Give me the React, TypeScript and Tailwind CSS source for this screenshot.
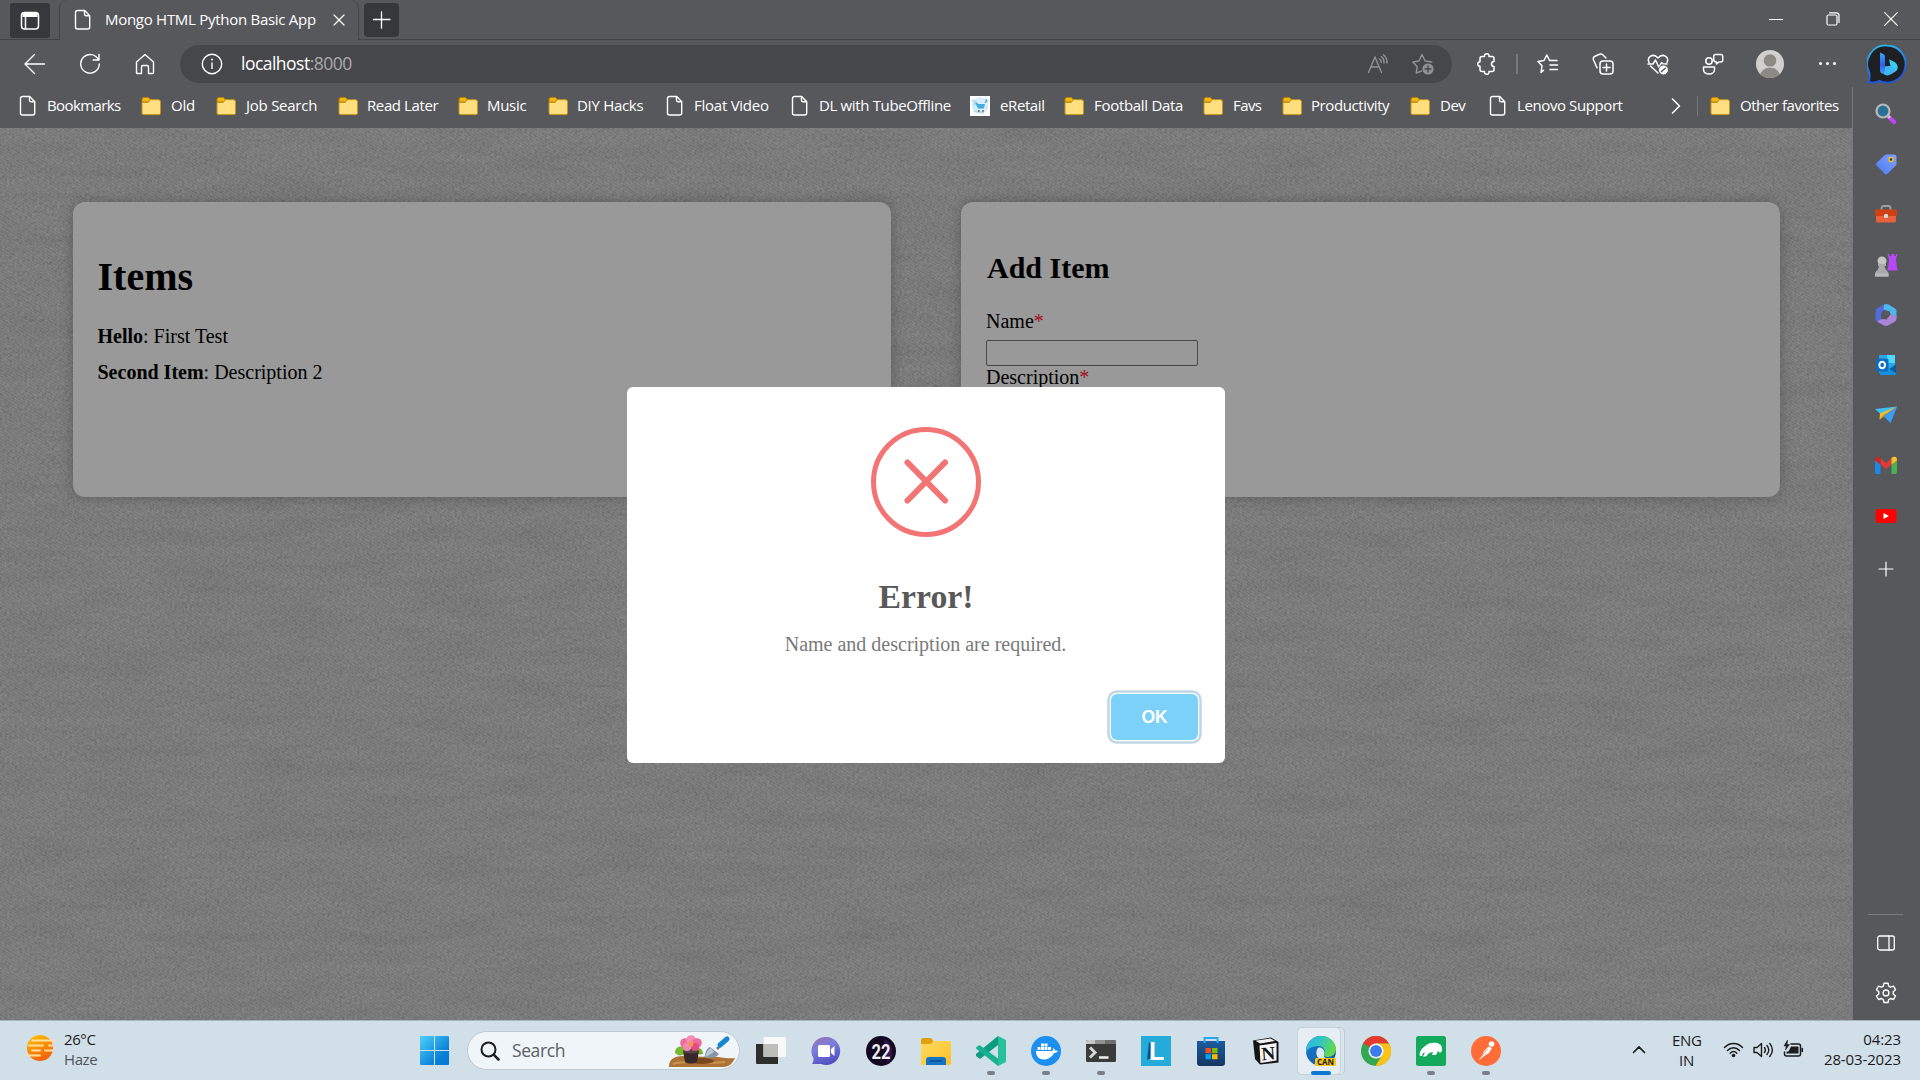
import React from "react";

const UI = "font-['Open_Sans','Noto_Sans',sans-serif]";

type SvgProps = { w?: number; h?: number; vb?: string; sw?: number; children: React.ReactNode; className?: string };

function Line({ w = 24, h = 24, vb = "0 0 24 24", sw = 1.4, children, className = "" }: SvgProps) {
  return (
    <svg width={w} height={h} viewBox={vb} fill="none" stroke="currentColor" strokeWidth={sw} strokeLinecap="round" strokeLinejoin="round" className={className}>
      {children}
    </svg>
  );
}

function Art({ w = 30, h = 30, vb = "0 0 30 30", children }: SvgProps) {
  return (
    <svg width={w} height={h} viewBox={vb} className="shrink-0">
      {children}
    </svg>
  );
}

function PageIcon() {
  return (
    <Line w={20} h={22} vb="0 0 20 22" sw={1.4} className="shrink-0">
      <path d="M4.500 1.500h7.200l5 5.200v11.300a2 2 0 0 1-2 2H4.500a2 2 0 0 1-2-2v-14.500a2 2 0 0 1 2-2z" />
      <path d="M11.500 1.700v3.500a1.600 1.600 0 0 0 1.600 1.600h3.400" />
    </Line>
  );
}

function FolderIcon() {
  return (
    <Art w={20} h={20} vb="0 0 20 20">
      <path d="M1 3.500a2 2 0 0 1 2-2h4.500l1.700 2-1.700 2.500H1z" fill="#f5b60d" stroke="#b58309" strokeWidth="1" />
      <path d="M1 6.500h6.200L9 3.700h8.500a2 2 0 0 1 2 2V17a1.600 1.600 0 0 1-1.600 1.600H2.600A1.600 1.600 0 0 1 1 17z" fill="#ffdf80" stroke="#c4951d" strokeWidth="1" />
    </Art>
  );
}

function RetailIcon() {
  return (
    <Art w={20} h={20} vb="0 0 20 20">
      <rect width="20" height="20" fill="#fff" />
      <circle cx="10" cy="9.500" r="8.300" fill="#d7eef8" />
      <path d="M2 4l4 2M3 8l3 .5M15 3l3 3M4 15l10 2" stroke="#b9dcec" strokeWidth="2" />
      <path d="M5 6.500h2l1 1.500h7l-1.200 4.500H8z" fill="#45acdf" />
      <path d="M15 7l2-3.500" stroke="#48a9db" strokeWidth="1.300" />
      <circle cx="8.800" cy="15" r="1" fill="#5a6a72" />
      <circle cx="13" cy="15" r="1" fill="#5a6a72" />
    </Art>
  );
}

const bookmarks = [
  { label: "Bookmarks", kind: "page", box: "w-[123px] gap-[9px]", track: "tracking-[-0.6px]" },
  { label: "Old", kind: "folder", box: "w-[75px] gap-[10px]", track: "tracking-[-0.2px]" },
  { label: "Job Search", kind: "folder", box: "w-[122px] gap-[10px]", track: "tracking-[-0.25px]" },
  { label: "Read Later", kind: "folder", box: "w-[120px] gap-[9px]", track: "tracking-[-0.4px]" },
  { label: "Music", kind: "folder", box: "w-[90px] gap-[9px]", track: "tracking-[-0.3px]" },
  { label: "DIY Hacks", kind: "folder", box: "w-[117px] gap-[9px]", track: "tracking-[-0.3px]" },
  { label: "Float Video", kind: "page", box: "w-[125px] gap-[9px]", track: "tracking-[-0.25px]" },
  { label: "DL with TubeOffline", kind: "page", box: "w-[180px] gap-[9px]", track: "tracking-[-0.35px]" },
  { label: "eRetail", kind: "retail", box: "w-[94px] gap-[10px]", track: "tracking-[-0.4px]" },
  { label: "Football Data", kind: "folder", box: "w-[139px] gap-[10px]", track: "tracking-[-0.3px]" },
  { label: "Favs", kind: "folder", box: "w-[79px] gap-[10px]", track: "tracking-[-0.6px]" },
  { label: "Productivity", kind: "folder", box: "w-[128px] gap-[9px]", track: "tracking-[-0.4px]" },
  { label: "Dev", kind: "folder", box: "w-[78px] gap-[10px]", track: "tracking-[-0.5px]" },
  { label: "Lenovo Support", kind: "page", box: "w-[174px] gap-[9px]", track: "tracking-[-0.4px]" },
];

function TabStrip() {
  return (
    <div className="flex h-[40px] shrink-0">
      <div className="flex w-[59px] border-b border-[#434448] pl-[10px] pt-[3px]">
        <div className="flex h-[35px] w-[40px] items-center justify-center rounded-[3px] bg-[#37383c]">
          <Line w={20} h={20} vb="0 0 20 20" sw={1.5}>
            <rect x="1.500" y="1.500" width="17" height="16.500" rx="3" />
            <path d="M2.500 4h15" strokeWidth="4" strokeLinecap="butt" />
            <path d="M5.500 6v12" />
          </Line>
        </div>
      </div>
      <div className="flex w-[300px] items-center rounded-t-[8px] border-x border-[#434448] pb-[1px] pl-[13px]">
        <PageIcon />
        <span className="ml-[12px] w-[228px] whitespace-nowrap text-[15px] tracking-[-0.28px]">Mongo HTML Python Basic App</span>
        <Line w={12} h={12} vb="0 0 12 12" sw={1.200}><path d="M1 1l10 10M11 1L1 11" /></Line>
      </div>
      <div className="flex flex-1 border-b border-[#434448] pl-[5px] pt-[3px]">
        <div className="flex h-[34px] w-[35px] items-center justify-center rounded-[4px] bg-[#37383c]">
          <Line w={18} h={18} vb="0 0 18 18" sw={1.300}><path d="M8.500 .8v16.400M.5 8.500h16.400" /></Line>
        </div>
        <div className="mt-[-3px] mr-[1px] ml-auto flex h-[38px]">
          <div className="flex w-[57px] items-center justify-center"><Line w={14} h={14} vb="0 0 14 14" sw={1.200}><path d="M.5 7.500h13" /></Line></div>
          <div className="flex w-[58px] items-center justify-center">
            <Line w={14} h={14} vb="0 0 14 14" sw={1.200}><rect x="1" y="3" width="10" height="10" rx="1.500" /><path d="M3.500.8h7a2.500 2.500 0 0 1 2.500 2.500v7.200" /></Line>
          </div>
          <div className="flex w-[57px] items-center justify-center"><Line w={14} h={14} vb="0 0 14 14" sw={1.200}><path d="M.7.7l12.600 12.600M13.300.7L.7 13.300" /></Line></div>
        </div>
      </div>
    </div>
  );
}

function BingIcon() {
  return (
    <Art w={40} h={40} vb="0 0 40 40">
      <defs>
        <linearGradient id="bingRing" x1="0" y1="0" x2="0.3" y2="1">
          <stop offset="0" stopColor="#2bc0ee" /><stop offset="1" stopColor="#1c55e6" />
        </linearGradient>
        <linearGradient id="bingB" x1="0" y1="0" x2="0" y2="1">
          <stop offset="0" stopColor="#37a5fa" /><stop offset=".6" stopColor="#2b62e6" /><stop offset="1" stopColor="#3f9df8" />
        </linearGradient>
      </defs>
      <path d="M20 1.500a18.500 18.500 0 1 1-7.500 35.400c-2.500 1.400-6.500 2-10.800 1.300 1-3.400 1.300-6 .7-9.500A18.500 18.500 0 0 1 20 1.500z" fill="#1e1f22" stroke="url(#bingRing)" strokeWidth="1.800" />
      <path d="M15.500 22.500v5.500c2 4.500 6 4 9 2l4-2.500c2.300-1.600 2.700-4 1.800-6z" fill="#3fb5f6" />
      <path d="M22 15.200l5.500 2.800c3.300 1.700 3.800 6 .8 8.500l-1.800-3.300-3-1.300z" fill="#37cff2" />
      <path d="M13 8.500l3.500 1.800c1 .6 1.500 1.200 1.500 2.400v14.500c0 3.500-5 3-5-.8z" fill="url(#bingB)" />
    </Art>
  );
}

function AddressRow() {
  return (
    <div className="flex h-[47px] shrink-0 items-center">
      <div className="flex w-[180px] items-center pl-[23px]">
        <Line w={22} h={22} vb="0 0 22 22" sw={1.400}><path d="M21.500 11H2.500M11.500 1.500L2 11l9.500 9.500" /></Line>
        <Line w={22} h={22} vb="0 0 22 22" sw={1.400} className="ml-[34px]"><path d="M19.500 7A9.300 9.300 0 1 0 20.300 11M20 1.500V7h-5.800" /></Line>
        <Line w={20} h={22} vb="0 0 20 22" sw={1.400} className="ml-[34px]"><path d="M10 1.500l8.500 7.500v10.500a1 1 0 0 1-1 1h-4v-6.500a1.500 1.500 0 0 0-1.500-1.500H8a1.500 1.500 0 0 0-1.500 1.500v6.500h-4a1 1 0 0 1-1-1V9z" /></Line>
      </div>
      <div className="flex h-[38px] w-[1272px] items-center rounded-full bg-[#46474a] pl-[21px]">
        <Line w={22} h={22} vb="0 0 22 22" sw={1.400}><circle cx="11" cy="11" r="9.700" /><path d="M11 10v5.500" /><path d="M11 6.500v.1" strokeWidth="2" /></Line>
        <span className="ml-[18px] text-[17.500px] tracking-[-0.52px]">localhost<span className="text-[#a9aaad]">:8000</span></span>
        <div className="ml-auto flex items-center gap-[23px] pr-[18px] text-[#919295]">
          <Line w={22} h={20} vb="0 0 22 20" sw={1.400}><path d="M1.500 18.500L8 3l6.500 15.500M4 13h8M12.500 5a4 4 0 0 1 1.800 3.500M14.500 2.500A7.500 7.500 0 0 1 17 9M16.500.8A10 10 0 0 1 20 9" /></Line>
          <Line w={22} h={22} vb="0 0 22 22" sw={1.400}>
            <path d="M9.500 18L4.200 20.200l1-6.500L.9 9l6-1L10 1.500l3.100 6.500 6.700 1" />
            <circle cx="16" cy="16" r="5.600" fill="currentColor" stroke="none" />
            <path d="M16 13v6M13 16h6" stroke="#46474a" />
          </Line>
        </div>
      </div>
      <div className="flex items-center pl-[8px]">
        <div className="flex w-[52px] justify-center">
          <Line w={22} h={22} vb="0 0 22 22" sw={1.500}><path d="M7 3.500h2.500a2.300 2.300 0 1 1 4.500 0h3a2 2 0 0 1 2 2v3a2.400 2.400 0 1 0 0 5v3a2 2 0 0 1-2 2H14a2.300 2.300 0 1 1-4.500 0H7a2 2 0 0 1-2-2v-3.200a2.300 2.300 0 1 1 0-4.600V5.500a2 2 0 0 1 2-2z" /></Line>
        </div>
        <div className="mr-[2px] ml-[4px] h-[20px] w-[2px] bg-[#77787c]" />
        <div className="flex w-[56px] justify-center">
          <Line w={22} h={20} vb="0 0 22 20" sw={1.500}><path d="M6.500 16.200L4 18.500l1-6.700L1 7.500l6-1L9.800 1l2.800 5.500H20M13 11h7.500M13 15.500h7.500" /></Line>
        </div>
        <div className="flex w-[54px] justify-center">
          <Line w={22} h={22} vb="0 0 22 22" sw={1.500}><rect x="8" y="8" width="13" height="13" rx="3" /><path d="M14.500 11v7M11 14.500h7M5 14.800L1.500 7A3 3 0 0 1 3 3.200L7.500 1.300a3 3 0 0 1 3.500.7l3 3" /></Line>
        </div>
        <div className="flex w-[56px] justify-center">
          <Line w={22} h={22} vb="0 0 22 22" sw={1.500}>
            <path d="M2 9.500C-.5 4 6 -.5 11 5c5-5.500 11.500-1 9 4.500M3.500 13l7.500 7M1 11h5l2.500-4 3.500 7.500 2.500-5 1.500 1.500h4" />
            <circle cx="16.500" cy="17" r="5" fill="#fff" stroke="#57585c" strokeWidth="1" /><path d="M14.500 18.500l3.800-3.300" stroke="#57585c" />
          </Line>
        </div>
        <div className="flex w-[54px] justify-center">
          <Line w={22} h={22} vb="0 0 22 22" sw={1.500}><circle cx="7" cy="8" r="3.200" /><path d="M1.500 14h11v2.500c0 6-11 6-11 0zM13.500 1.500h5.500a1.700 1.700 0 0 1 1.700 1.700v4A1.700 1.700 0 0 1 19 9h-2l-2.500 2V9c-2 0-2.800-.8-2.800-2.500V3.200a1.700 1.700 0 0 1 1.800-1.700z" /></Line>
        </div>
        <div className="flex w-[60px] justify-center">
          <Art w={28} h={28} vb="0 0 28 28">
            <clipPath id="avatarClip"><circle cx="14" cy="14" r="14" /></clipPath>
            <g clipPath="url(#avatarClip)"><rect width="28" height="28" fill="#d2d0ce" /><circle cx="14" cy="10.500" r="6.300" fill="#8d8985" /><circle cx="14" cy="28" r="11" fill="#8d8985" stroke="#d2d0ce" strokeWidth="1" /></g>
          </Art>
        </div>
        <div className="flex w-[55px] justify-center gap-[4px]">
          <i className="size-[3px] rounded-full bg-white" /><i className="size-[3px] rounded-full bg-white" /><i className="size-[3px] rounded-full bg-white" />
        </div>
        <div className="flex w-[62px] justify-center pt-[1px] pl-[2px]"><BingIcon /></div>
      </div>
    </div>
  );
}

function BookmarksBar() {
  return (
    <div className="flex h-[41px] shrink-0 items-center pb-[3px] pl-[18px] text-[15px]">
      {bookmarks.map((b) => (
        <div key={b.label} className={`flex shrink-0 items-center whitespace-nowrap ${b.box} ${b.track}`}>
          {b.kind === "page" ? <PageIcon /> : b.kind === "retail" ? <RetailIcon /> : <FolderIcon />}
          <span className="pb-px">{b.label}</span>
        </div>
      ))}
      <div className="flex w-[28px] shrink-0 justify-center"><Line w={10} h={16} vb="0 0 10 16" sw={1.500}><path d="M1.500 1l7 7-7 7" /></Line></div>
      <div className="mr-[12px] ml-[7px] h-[20px] w-px bg-[#77787c]" />
      <FolderIcon />
      <span className="ml-[10px] whitespace-nowrap pb-px tracking-[-0.45px]">Other favorites</span>
    </div>
  );
}

function FabricTexture() {
  return (
    <svg className="absolute inset-0 h-full w-full">
      <defs>
        <pattern id="twill" width="5" height="3" patternUnits="userSpaceOnUse">
          <path d="M-1 -0.600l7 4.200" stroke="#fff" strokeWidth="1" opacity="0.06" />
        </pattern>
        <filter id="fabric" x="0" y="0" width="100%" height="100%" colorInterpolationFilters="sRGB">
          <feTurbulence type="fractalNoise" baseFrequency="0.4 0.35" numOctaves="2" seed="4" />
          <feColorMatrix values="0.12 0.06 0 0 0.388  0.12 0.06 0 0 0.388  0.12 0.06 0 0 0.388  0 0 0 0 1" />
        </filter>
        <filter id="streaks" x="0" y="0" width="100%" height="100%" colorInterpolationFilters="sRGB">
          <feTurbulence type="fractalNoise" baseFrequency="0.012 0.06" numOctaves="4" seed="9" />
          <feColorMatrix values="0 0 0 0 0  0 0 0 0 0  0 0 0 0 0  0.5 0 0 0 -0.18" />
        </filter>
      </defs>
      <rect width="100%" height="100%" filter="url(#fabric)" />
      <rect width="100%" height="100%" fill="url(#twill)" />
      <rect width="100%" height="100%" filter="url(#streaks)" opacity="0.18" />
    </svg>
  );
}

const cardClass = "h-[295px] rounded-[12px] bg-[#999999] shadow-[0_0_14px_rgba(0,0,0,0.25)]";

function WebPage() {
  return (
    <main className="relative flex-1 overflow-hidden bg-[#787878] font-['Liberation_Serif',serif] text-[20px] text-black">
      <FabricTexture />
      <div className="relative grid grid-cols-[818px_819px] gap-[70px] pl-[73px] pt-[74px]">
        <section className={`${cardClass} pl-[24.500px] pt-[52px]`}>
          <h1 className="text-[40px] leading-[46px] font-bold">Items</h1>
          <ul className="mt-[18px] leading-[36px]">
            <li><b>Hello</b>: First Test</li>
            <li><b>Second Item</b>: Description 2</li>
          </ul>
        </section>
        <section className={`${cardClass} pl-[25px] pt-[49px]`}>
          <h2 className="pl-px text-[30px] leading-[34px] font-bold">Add Item</h2>
          <label className="mt-[24px] block leading-[24px]">Name<span className="text-[#a80d1c]">*</span></label>
          <input className="mt-[7px] block h-[26px] w-[212px] rounded-[2px] border border-[#474747] bg-[#999999]" />
          <label className="block leading-[23px]">Description<span className="text-[#a80d1c]">*</span></label>
        </section>
      </div>
      <div className="absolute inset-0 flex items-center justify-center pt-[2px]">
        <div role="dialog" className="flex h-[376px] w-[598px] flex-col items-center rounded-[6px] bg-white pt-[40px]">
          <svg width="110" height="110" viewBox="0 0 110 110" fill="none" stroke="#f27474" strokeWidth="5" strokeLinecap="round">
            <circle cx="55" cy="55" r="52.500" /><path d="M36.500 35.500l37.500 38M74 35.500l-37.500 38" strokeWidth="6" />
          </svg>
          <h2 className="mt-[40px] text-[33.750px] leading-[40px] font-bold text-[#595959]">Error!</h2>
          <p className="mt-[15px] mr-[1px] leading-[24px] text-[#797979]">Name and description are required.</p>
          <button className="mt-[38px] mr-[27px] h-[46px] w-[87px] self-end rounded-[6px] bg-[#7cd1f9] font-['Liberation_Sans',sans-serif] text-[17.500px] font-bold text-white shadow-[0_0_0_1.250px_#fff,0_0_0_3.750px_rgba(43,114,165,0.290)]">OK</button>
        </div>
      </div>
    </main>
  );
}

const sideIcons: React.ReactNode[] = [
  <Art w={22} h={22} vb="0 0 22 22">
    <path d="M14.500 14.500L19 19" stroke="#c143f5" strokeWidth="4.200" strokeLinecap="round" /><path d="M12 12l3 3" stroke="#c5c5c5" strokeWidth="3" />
    <circle cx="8" cy="8" r="6.500" fill="#2a6f95" stroke="#b9b9b9" strokeWidth="2.200" />
  </Art>,
  <Art w={22} h={22} vb="0 0 22 22">
    <defs><linearGradient id="tagFill" x1="0" y1="1" x2="1" y2="0"><stop offset="0" stopColor="#4a7cf3" /><stop offset="1" stopColor="#86a0ff" /></linearGradient></defs>
    <path d="M12 1.500h7a2.500 2.500 0 0 1 2.500 2.500v6.500c0 1-.3 1.500-1 2.200l-8 8a2 2 0 0 1-2.800 0l-8-8.200a2 2 0 0 1 0-2.800l8-7.500c.7-.5 1.300-.7 2.300-.7z" fill="url(#tagFill)" />
    <circle cx="16" cy="6.500" r="2" fill="#20306c" stroke="#f1c40f" strokeWidth="1.500" />
  </Art>,
  <Art w={24} h={20} vb="0 0 24 20">
    <path d="M7.500 6V4a2 2 0 0 1 2-2h5a2 2 0 0 1 2 2v2" fill="none" stroke="#a0a0a0" strokeWidth="1.800" />
    <rect x="2" y="8" width="20" height="10.500" rx="1.800" fill="#e8613c" /><rect x="1" y="5.500" width="22" height="6.500" rx="1.200" fill="#cf4015" /><circle cx="12" cy="12" r="2.200" fill="#d9d9d9" />
  </Art>,
  <Art w={24} h={24} vb="0 0 24 24">
    <path d="M13.500 1h2v2h2V1h3v2h1.500V1h1.500l-1.500 5.500.8 7.500 1 3.500H13l1.200-3.500.8-7.500z" fill="#b648f5" />
    <circle cx="8" cy="8" r="4.500" fill="#c4c4c4" /><path d="M4 11h8v2h-1.500c0 3 2 4 4 7v3.500H1V20c2-3 4-4 4-7H4z" fill="#aaa" /><path d="M1 20.500h13.500v3H1z" fill="#b9b9b9" />
  </Art>,
  <Art w={24} h={24} vb="0 0 24 24">
    <path d="M10 1.500L3 5.500a3 3 0 0 0-1.500 2.500v8A3 3 0 0 0 3 18.500l4 2v-9c0-2 1-3 2.500-4l5-3z" fill="#536bd9" />
    <path d="M10 1.500c1.500-.7 3-.7 4.500 0L21 5.500A3 3 0 0 1 22.500 8v6l-6-2.500-.8-3L9.500 6.500z" fill="#4fb6ec" />
    <path d="M22.500 13v3a3 3 0 0 1-1.500 2.500l-7 4c-1.200.6-2.500.6-4 0L3 18.500l4.500-2.500 5 .5 4-5z" fill="#a984d9" />
  </Art>,
  <Art w={22} h={22} vb="0 0 22 22">
    <rect x="4" y="1" width="16" height="18" rx="1" fill="#28a8ea" /><path d="M12 1h7a1 1 0 0 1 1 1v7h-8z" fill="#50d9ff" /><path d="M5 12l9 5 7-6v9a1 1 0 0 1-1 1H6a1 1 0 0 1-1-1z" fill="#1490df" /><path d="M14 15l7-4.500V19z" fill="#0a5ba0" />
    <rect x="1" y="4.500" width="12.500" height="13" rx="1.500" fill="#0e6cc0" /><ellipse cx="7.200" cy="11" rx="2.800" ry="3.300" fill="none" stroke="#fff" strokeWidth="2" />
  </Art>,
  <Art w={24} h={20} vb="0 0 24 20">
    <path d="M1 4l22-2.500-15 9z" fill="#3fc0f3" /><path d="M23 1.500L16.500 18 10 10.500z" fill="#2f8fe6" /><path d="M23 1.500L6 8.500l-.5 6z" fill="#f5c02c" /><path d="M23 1.500L8.500 10.500l-3 4.500 5-4z" fill="#d99505" /><path d="M23 1.500L9.500 11l7 7z" fill="#3c9cf1" />
  </Art>,
  <Art w={24} h={20} vb="0 0 24 20">
    <path d="M1 5l5.500 4v10H3a2 2 0 0 1-2-2z" fill="#1e88e5" /><path d="M23 5l-5.500 4v10H21a2 2 0 0 0 2-2z" fill="#4caf50" />
    <path d="M6.500 3.500L12 8l5.500-4.500V9.500L12 14 6.500 9.500z" fill="#e53935" /><path d="M1 4.500C1 1.500 4 .8 6.500 3v6.500L1 5.500z" fill="#c62828" /><path d="M23 4.500c0-3-3-3.700-5.500-1.500v6.500L23 5.500z" fill="#fbc02d" />
  </Art>,
  <Art w={22} h={16} vb="0 0 22 16">
    <rect x=".5" y="1" width="21" height="14" rx="3" fill="#f00" /><path d="M8.500 5v6l5.500-3z" fill="#fff" />
  </Art>,
];

function Sidebar() {
  return (
    <aside className="flex w-[67px] shrink-0 flex-col items-center bg-[#57585c] pt-[2px] pr-[2px]">
      {sideIcons.map((icon, i) => (
        <div key={i} className="flex h-[50.200px] shrink-0 items-center">{icon}</div>
      ))}
      <div className="mt-[3px] flex h-[50px] items-center"><Line w={16} h={16} vb="0 0 16 16" sw={1.200}><path d="M8 1v14M1 8h14" /></Line></div>
      <div className="mt-auto h-px w-[35px] bg-[#7b7c80]" />
      <div className="flex h-[55px] items-center"><Line w={18} h={16} vb="0 0 18 16" sw={1.300}><rect x=".7" y="1" width="16.600" height="14" rx="2" /><path d="M12 1v14" /></Line></div>
      <div className="mb-[4px] flex h-[46px] items-center">
        <Line w={22} h={22} vb="0 0 22 22" sw={1.400}>
          <path d="M9 1.200h4l.7 3 1.800 1 3-1 2 3.500-2.300 2v2.200l2.300 2.100-2 3.500-3-1-1.800 1-.7 3H9l-.7-3-1.800-1-3 1-2-3.500 2.300-2.100V9.700l-2.300-2 2-3.500 3 1 1.800-1z" /><circle cx="11" cy="10.900" r="2.900" />
        </Line>
      </div>
    </aside>
  );
}

function FlowerArt() {
  return (
    <Art w={67} h={33} vb="0 0 67 33">
      <path d="M0 32c0-7 4-11 14-11 12-1 15 2 26 0 12 1 18 3 26 2-2 5-6 9-12 9z" fill="#ad7235" />
      <path d="M4 29c15-5 35 1 52-2" stroke="#c9954d" strokeWidth="2" fill="none" />
      <ellipse cx="33" cy="26" rx="12" ry="3" fill="#7b471d" />
      <path d="M6 18c0-6 5-8 10-5v6c-4 2-7 2-10-1zM27 13c4-1 7 2 7 6-4 1-7 0-8-3z" fill="#78b82c" />
      <path d="M14 16h16l-2 11c-2 2-10 2-12 0z" fill="#37292a" /><ellipse cx="22" cy="16" rx="8" ry="2.500" fill="#594546" />
      <circle cx="16" cy="8" r="4.800" fill="#ee6c99" /><circle cx="22" cy="5" r="4.800" fill="#f48db4" /><circle cx="28" cy="8" r="4.800" fill="#ee6c99" /><circle cx="26" cy="12" r="4" fill="#e34b85" /><circle cx="18" cy="12" r="4" fill="#f389b0" /><circle cx="22" cy="9" r="2.500" fill="#f39a4a" />
      <path d="M48 14l4-4" stroke="#777" strokeWidth="2.500" /><path d="M51 10l7-6" stroke="#1685d2" strokeWidth="5" strokeLinecap="round" />
      <path d="M41 12l9 7c-3 4-8 4-14 4 0-5 1-9 5-11z" fill="#8496a3" /><path d="M42 13l3 4-8 5c0-4 1-7 5-9z" fill="#bccbd5" />
    </Art>
  );
}

const taskApps: { icon: React.ReactNode; running?: boolean; active?: boolean }[] = [
  { icon: <Art><path d="M0 8h22v20H1a1 1 0 0 1-1-1z" fill="#2e2e2c" /><rect x="7.500" y="1" width="22.500" height="20" rx="1" fill="#f8f8f8" /><path d="M7.500 8H22v13H7.500z" fill="#bdbdbb" /></Art> },
  { icon: <Art>
    <defs><linearGradient id="chat" x1="0" y1="0" x2=".4" y2="1"><stop offset="0" stopColor="#9a6fae" /><stop offset=".45" stopColor="#7a7fdc" /><stop offset="1" stopColor="#5352c4" /></linearGradient></defs>
    <path d="M15 1a14 14 0 1 1-5 27H2c-1 0-1-.6-.3-1.500.8-1 1-2.500.7-4.500A14 14 0 0 1 15 1z" fill="url(#chat)" /><rect x="7" y="9" width="12" height="12" rx="1.500" fill="#fff" /><path d="M20 13l3.500-3v10L20 17z" fill="#fff" /></Art> },
  { icon: <Art><circle cx="15" cy="15" r="15" fill="#130a22" /><path d="M18 3a14 14 0 0 1 3 24z" fill="#2d1451" /><text x="15" y="22.500" textAnchor="middle" fontSize="21" fontWeight="700" fill="#eee" textLength="19" lengthAdjust="spacingAndGlyphs" fontFamily="Roboto">22</text></Art> },
  { icon: <Art>
    <defs><linearGradient id="fold" x1="0" y1="0" x2="1" y2="1"><stop offset="0" stopColor="#ffdb5f" /><stop offset="1" stopColor="#fdbe2a" /></linearGradient></defs>
    <path d="M0 4a2 2 0 0 1 2-2h8l3 4-3 5H0z" fill="#dfa00e" /><path d="M0 8h10l2.500-3H28a2 2 0 0 1 2 2v20a2 2 0 0 1-2 2H1.500A1.500 1.500 0 0 1 0 27.500z" fill="url(#fold)" /><path d="M5 29v-5a3 3 0 0 1 3-3h14a3 3 0 0 1 3 3v5z" fill="#1373c5" /><path d="M9 25h12" stroke="#0a4d91" strokeWidth="1.500" /></Art> },
  { icon: <Art><path d="M22 0l8 4v22l-8 4z" fill="#28bf9d" /><path d="M22 0v9L4 23l-4-3v-2z" fill="#0c9c80" /><path d="M0 11.500L3.500 9 22 22.500V30L0 12.500z" fill="#18b293" /></Art>, running: true },
  { icon: <Art><circle cx="15" cy="15" r="15" fill="#1d8ff0" /><path d="M5 15h16c1 0 1.300-1.500.7-3 1.600.3 2 1.500 2.300 2.500l3 .3c-1 2-2.500 2.200-4 2.200C21 21 17 23.500 13 23.500c-5 0-8-3-8-8.500z" fill="#fff" /><path d="M6.500 11h3v3h-3zM10 11h3v3h-3zM13.500 11h3v3h-3zM17 11h3v3h-3zM10 7.600h3v3h-3zM13.500 7.600h3v3h-3z" fill="#fff" /></Art>, running: true },
  { icon: <Art><rect y="4" width="30" height="22" rx="1.500" fill="#3b3b3b" /><path d="M0 5.500A1.500 1.500 0 0 1 1.500 4H9v4H0z" fill="#c7c7c7" /><path d="M9 4h10v4H9z" fill="#919191" /><path d="M19 4h9.500A1.500 1.500 0 0 1 30 5.500V8H19z" fill="#6f6f6f" /><path d="M4 11.500l5 5-5 5" stroke="#d6d6d6" strokeWidth="3" fill="none" /><path d="M13 21.500h9.500" stroke="#f2f2f2" strokeWidth="2.500" /></Art>, running: true },
  { icon: <Art><rect width="30" height="30" fill="#25abda" /><path d="M6 24l2-18 4 3v12z" fill="#114f86" /><text x="8" y="23.500" fontSize="25" fontWeight="700" fill="#fff" fontFamily="Liberation Sans">L</text></Art> },
  { icon: <Art>
    <defs><linearGradient id="store" x1="0" y1="0" x2="0" y2="1"><stop offset="0" stopColor="#1b5c9e" /><stop offset="1" stopColor="#153662" /></linearGradient></defs>
    <path d="M1 5h28v22a3 3 0 0 1-3 3H4a3 3 0 0 1-3-3z" fill="url(#store)" /><path d="M8.500 7V2h13v5" stroke="#24a8ee" strokeWidth="2" fill="none" /><path d="M9.500 12H15v5.200H9.500z" fill="#f25022" /><path d="M16 12h5.500v5.200H16z" fill="#7fba00" /><path d="M9.500 18.200H15v5H9.500z" fill="#00a4ef" /><path d="M16 18.200h5.500v5H16z" fill="#ffb900" /></Art> },
  { icon: <Art><path d="M2 4.500L20 1.500l7.500 4.500v20.500L9 28.500l-5-5.500z" fill="#151515" /><path d="M4.500 4.800l15-2.300 4.500 2.500L9 7.500z" fill="#f4f4f4" /><path d="M8.500 9.500l17-2.500v17.500l-16 2.500z" fill="#f7f7f7" /><text x="10.500" y="24" fontSize="19" fontWeight="700" fill="#151515" fontFamily="Liberation Serif" transform="rotate(-5 17 18)">N</text></Art> },
  { icon: <Art>
    <defs>
      <linearGradient id="edgeTop" x1="0" y1="0" x2="1" y2=".4"><stop offset="0" stopColor="#2fb0ea" /><stop offset=".5" stopColor="#31c6c5" /><stop offset="1" stopColor="#63d94f" /></linearGradient>
      <linearGradient id="edgeBody" x1="0" y1="0" x2="1" y2="1"><stop offset="0" stopColor="#1683d8" /><stop offset="1" stopColor="#124f94" /></linearGradient>
    </defs>
    <circle cx="15" cy="15" r="15" fill="url(#edgeBody)" /><path d="M0 14C1 5 8 0 15 0c9 0 15 6.500 15 13 0 5-4 8-8 8-3.500 0-5-1.500-4-3 2-3 0-8-6-8C6 10 1 13 0 17z" fill="url(#edgeTop)" /><path d="M12 12c-3 4-2 10 4 13 3 1.500 7 1 10-1-3 0-9-1-8-6 1.500-3-2-8-6-6z" fill="#dceaf2" />
    <rect x="9" y="22" width="21" height="8" rx="1.500" fill="#fcc419" /><text x="19.500" y="29" textAnchor="middle" fontSize="8" fontWeight="700" fill="#222" fontFamily="Open Sans">CAN</text></Art>, active: true },
  { icon: <Art><circle cx="15" cy="15" r="15" fill="#33a853" /><path d="M15 15L2 7.500A15 15 0 0 1 28 7.500H15z" fill="#e63a2e" /><path d="M15 7.500h13A15 15 0 0 1 14.500 30L21.500 18z" fill="#fbc116" /><path d="M2 7.500L8.500 19 15 15z" fill="#33a853" /><circle cx="15" cy="15" r="7.500" fill="#fff" /><circle cx="15" cy="15" r="6" fill="#3b7ded" /></Art> },
  { icon: <Art><rect width="30" height="30" rx="2.500" fill="#13aa5b" /><path d="M4 20c-1-3 1-7 4-9 3-3.500 8-5 13-4 1 0 2 .5 2.500 1.500l1.500.5c1 2 1 4 1 6l-2 2-2-2-2 4h-4l1-3-4 1-3 3.500H7l2-4-2 .5-1 3z" fill="#fff" /></Art>, running: true },
  { icon: <Art><circle cx="15" cy="15" r="15" fill="#ff6c37" /><circle cx="20.500" cy="8" r="2.800" fill="#fff" /><path d="M17.500 10.500l3.500 1.500-3 5-5.500 3.500-5 4 4-5.500 1.500-4z" fill="#fff" /><path d="M16.500 13l-6.500 8" stroke="#ff9b76" strokeWidth="1" /></Art>, running: true },
];

function Taskbar() {
  return (
    <footer className={`flex h-[60px] shrink-0 border-t border-[#a9b5bc] bg-[#d0dfe8] text-[15px] text-[#1c1c1c] ${UI}`}>
      <div className="flex w-[420px] items-start pl-[25px] pt-[8px]">
        <div className="pt-[4px]">
          <Art>
            <defs><linearGradient id="sun" x1="0" y1="0" x2=".4" y2="1"><stop offset="0" stopColor="#ffc400" /><stop offset="1" stopColor="#f2640d" /></linearGradient></defs>
            <circle cx="15" cy="15" r="13" fill="url(#sun)" /><path d="M7 7.500h22M4 12.500h14M24 12.500h3M7 17.500h8M20 17.500h8M1 22.500h14" stroke="#ffe0a0" strokeWidth="1.800" strokeLinecap="round" />
          </Art>
        </div>
        <div className="ml-[9px] leading-[20px]"><div className="tracking-[-0.4px]">26°C</div><div className="tracking-[-0.4px] text-[#4c555b]">Haze</div></div>
      </div>
      <div className="flex items-center">
        <Art w={29} h={29} vb="0 0 29 29">
          <defs><linearGradient id="win" gradientUnits="userSpaceOnUse" x1="0" y1="0" x2="29" y2="29"><stop offset="0" stopColor="#4cd0fd" /><stop offset=".7" stopColor="#0a81d8" /><stop offset="1" stopColor="#0078d4" /></linearGradient></defs>
          <path d="M1 0h13v14H0V1a1 1 0 0 1 1-1zM15 0h13a1 1 0 0 1 1 1v13H15zM0 15h14v14H1a1 1 0 0 1-1-1zM15 15h14v13a1 1 0 0 1-1 1H15z" fill="url(#win)" />
        </Art>
        <div className="ml-[18px] flex h-[39px] w-[273px] items-center overflow-hidden rounded-full border border-[#bccbd4] bg-[#f0f5f9] pl-[12px]">
          <Line w={20} h={20} vb="0 0 20 20" sw={2}><circle cx="8.500" cy="8.500" r="7" /><path d="M13.700 13.700L18.500 18.500" strokeWidth="2.500" /></Line>
          <span className="ml-[12px] text-[17.500px] tracking-[-0.4px] text-[#5a6064]">Search</span>
          <div className="mt-[2px] mr-[3px] ml-auto"><FlowerArt /></div>
        </div>
      </div>
      <div className="flex pl-[4px]">
        {taskApps.map((app, i) => (
          <div key={i} className="relative flex w-[55px] items-center justify-center">
            {app.active && <div className="absolute top-[6px] left-[3px] h-[48px] w-[48px] rounded-[5px] border border-[#c0ced7] bg-[#dae6ed]" />}
            {app.active && <div className="absolute top-[6px] left-[3px] h-[48px] w-[44px] rounded-[5px] border border-[#c5d2da] bg-[#e6eef3]" />}
            <div className="relative mr-px">{app.icon}</div>
            {app.running && <div className="absolute bottom-[5px] left-[23px] h-[4px] w-[8px] rounded-full bg-[#788086]" />}
            {app.active && <div className="absolute bottom-[5px] left-[17px] h-[4px] w-[20px] rounded-full bg-[#0b77d3]" />}
          </div>
        ))}
      </div>
      <div className="ml-auto flex items-start pt-[8px] pr-[19px]">
        <Line w={14} h={9} vb="0 0 14 9" sw={1.700} className="mt-[16px]"><path d="M1.500 7.500L7 1.800l5.500 5.700" /></Line>
        <div className="ml-[26px] w-[29px] pt-px text-center leading-[20px] tracking-[-0.3px]"><div>ENG</div><div>IN</div></div>
        <div className="mt-[11px] ml-[22px] flex gap-[9px]">
          <Line w={21} h={20} vb="0 0 21 20" sw={1.500}><path d="M1.500 7.500c5-5.500 13-5.500 18 0M4.500 10.500c3.500-3.800 8.500-3.800 12 0M7.200 13.200c2-2.200 4.600-2.200 6.600 0" /><circle cx="10.500" cy="15.500" r="1.800" fill="currentColor" stroke="none" /></Line>
          <Line w={21} h={20} vb="0 0 21 20" sw={1.400}><path d="M1 7.500h3L8.500 3.500v13L4 12.500H1zM11.500 7.500c1 1.500 1 3.500 0 5M14 5.500c2.200 2.800 2.200 6.200 0 9M16.800 3.500c3.200 4 3.200 9 0 13" /></Line>
          <Line w={21} h={20} vb="0 0 21 20" sw={1.500}><path d="M8 4h7.500a2 2 0 0 1 2 2v8a2 2 0 0 1-2 2h-12a2 2 0 0 1-2-2v-2M19.300 8.500v3" /><path d="M8 6.500h7.500v7h-12v-2h2z" fill="currentColor" stroke="none" /><path d="M4.500 0L1 6h2.200L2.500 10 6.500 4.500H4.300z" fill="currentColor" strokeWidth=".5" /></Line>
        </div>
        <div className="w-[97px] text-right leading-[20px] tracking-[-0.12px]"><div>04:23</div><div>28-03-2023</div></div>
      </div>
    </footer>
  );
}

export default function App() {
  return (
    <div className="flex h-[1080px] w-[1920px] flex-col overflow-hidden bg-[#57585c]">
      <div className={`flex shrink-0 flex-col text-white ${UI}`}>
        <TabStrip />
        <AddressRow />
      </div>
      <div className="flex h-[933px] shrink-0">
        <div className="flex w-[1853px] flex-col border-r border-[#77787c]">
          <div className={`text-white ${UI}`}><BookmarksBar /></div>
          <WebPage />
        </div>
        <div className={`flex text-white ${UI}`}><Sidebar /></div>
      </div>
      <Taskbar />
    </div>
  );
}
